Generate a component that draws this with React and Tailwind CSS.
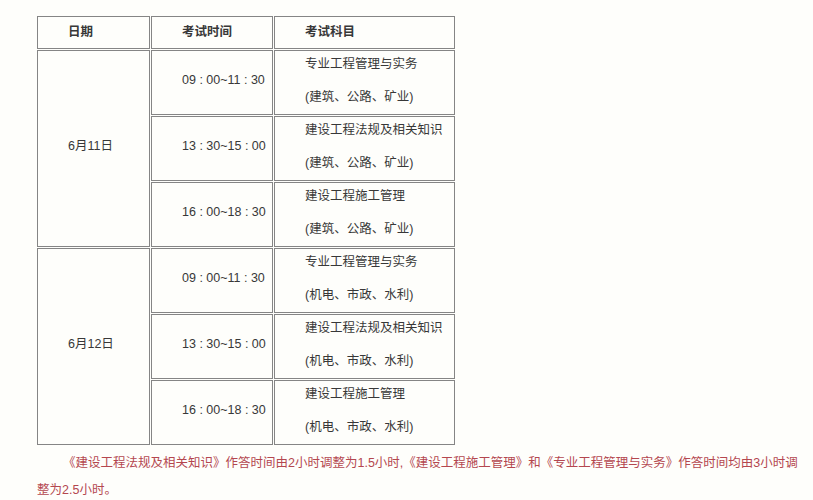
import React from 'react';

const rows = [
  {
    date: '6月11日',
    items: [
      { time: '09 : 00~11 : 30', subject: '专业工程管理与实务', scope: '(建筑、公路、矿业)' },
      { time: '13 : 30~15 : 00', subject: '建设工程法规及相关知识', scope: '(建筑、公路、矿业)' },
      { time: '16 : 00~18 : 30', subject: '建设工程施工管理', scope: '(建筑、公路、矿业)' },
    ],
  },
  {
    date: '6月12日',
    items: [
      { time: '09 : 00~11 : 30', subject: '专业工程管理与实务', scope: '(机电、市政、水利)' },
      { time: '13 : 30~15 : 00', subject: '建设工程法规及相关知识', scope: '(机电、市政、水利)' },
      { time: '16 : 00~18 : 30', subject: '建设工程施工管理', scope: '(机电、市政、水利)' },
    ],
  },
];

const cell = 'border border-[#858585] align-middle pl-[30px] pr-0 pt-0 text-left';

export default function App() {
  return (
    <div
      className="w-[813px] h-[500px] overflow-hidden bg-[#fefefb] text-[#383838] text-[12.5px]"
      style={{ fontFamily: '"Liberation Sans", "Noto Sans CJK SC", sans-serif' }}
    >
      {/* previous line, cut off by the top edge */}
      <div className="h-[3px] overflow-hidden">
        <p className="pl-[63px] -mt-[13px] leading-[16px] text-[#777]">二、考试时间安排：</p>
      </div>

      <table className="ml-[36px] mt-[12px] w-[420px] table-fixed border-separate border-spacing-[1px]">
        <colgroup>
          <col className="w-[113px]" />
          <col className="w-[122px]" />
          <col className="w-[181px]" />
        </colgroup>
        <thead>
          <tr className="h-[33px]">
            <th className={`${cell} pb-0 font-bold`}>日期</th>
            <th className={`${cell} pb-0 font-bold`}>考试时间</th>
            <th className={`${cell} pb-0 font-bold`}>考试科目</th>
          </tr>
        </thead>
        <tbody>
          {rows.map(group =>
            group.items.map((it, i) => (
              <tr key={group.date + i} className="h-[65px]">
                {i === 0 && (
                  <td rowSpan={3} className={`${cell} pb-[5px]`}>
                    {group.date}
                  </td>
                )}
                <td className={`${cell} pb-[5px]`}>{it.time}</td>
                <td className={`${cell} pb-[4px]`}>
                  <div className="leading-[16px]">{it.subject}</div>
                  <div className="leading-[16px] mt-[17px]">{it.scope}</div>
                </td>
              </tr>
            ))
          )}
        </tbody>
      </table>

      <div className="ml-[37px] mt-[4px] text-[#b4474f] leading-[27px]">
        <p className="pl-[26px] whitespace-nowrap">
          《建设工程法规及相关知识》作答时间由2小时调整为1.5小时,《建设工程施工管理》和《专业工程管理与实务》作答时间均由3小时调
        </p>
        <p>整为2.5小时。</p>
      </div>
    </div>
  );
}
